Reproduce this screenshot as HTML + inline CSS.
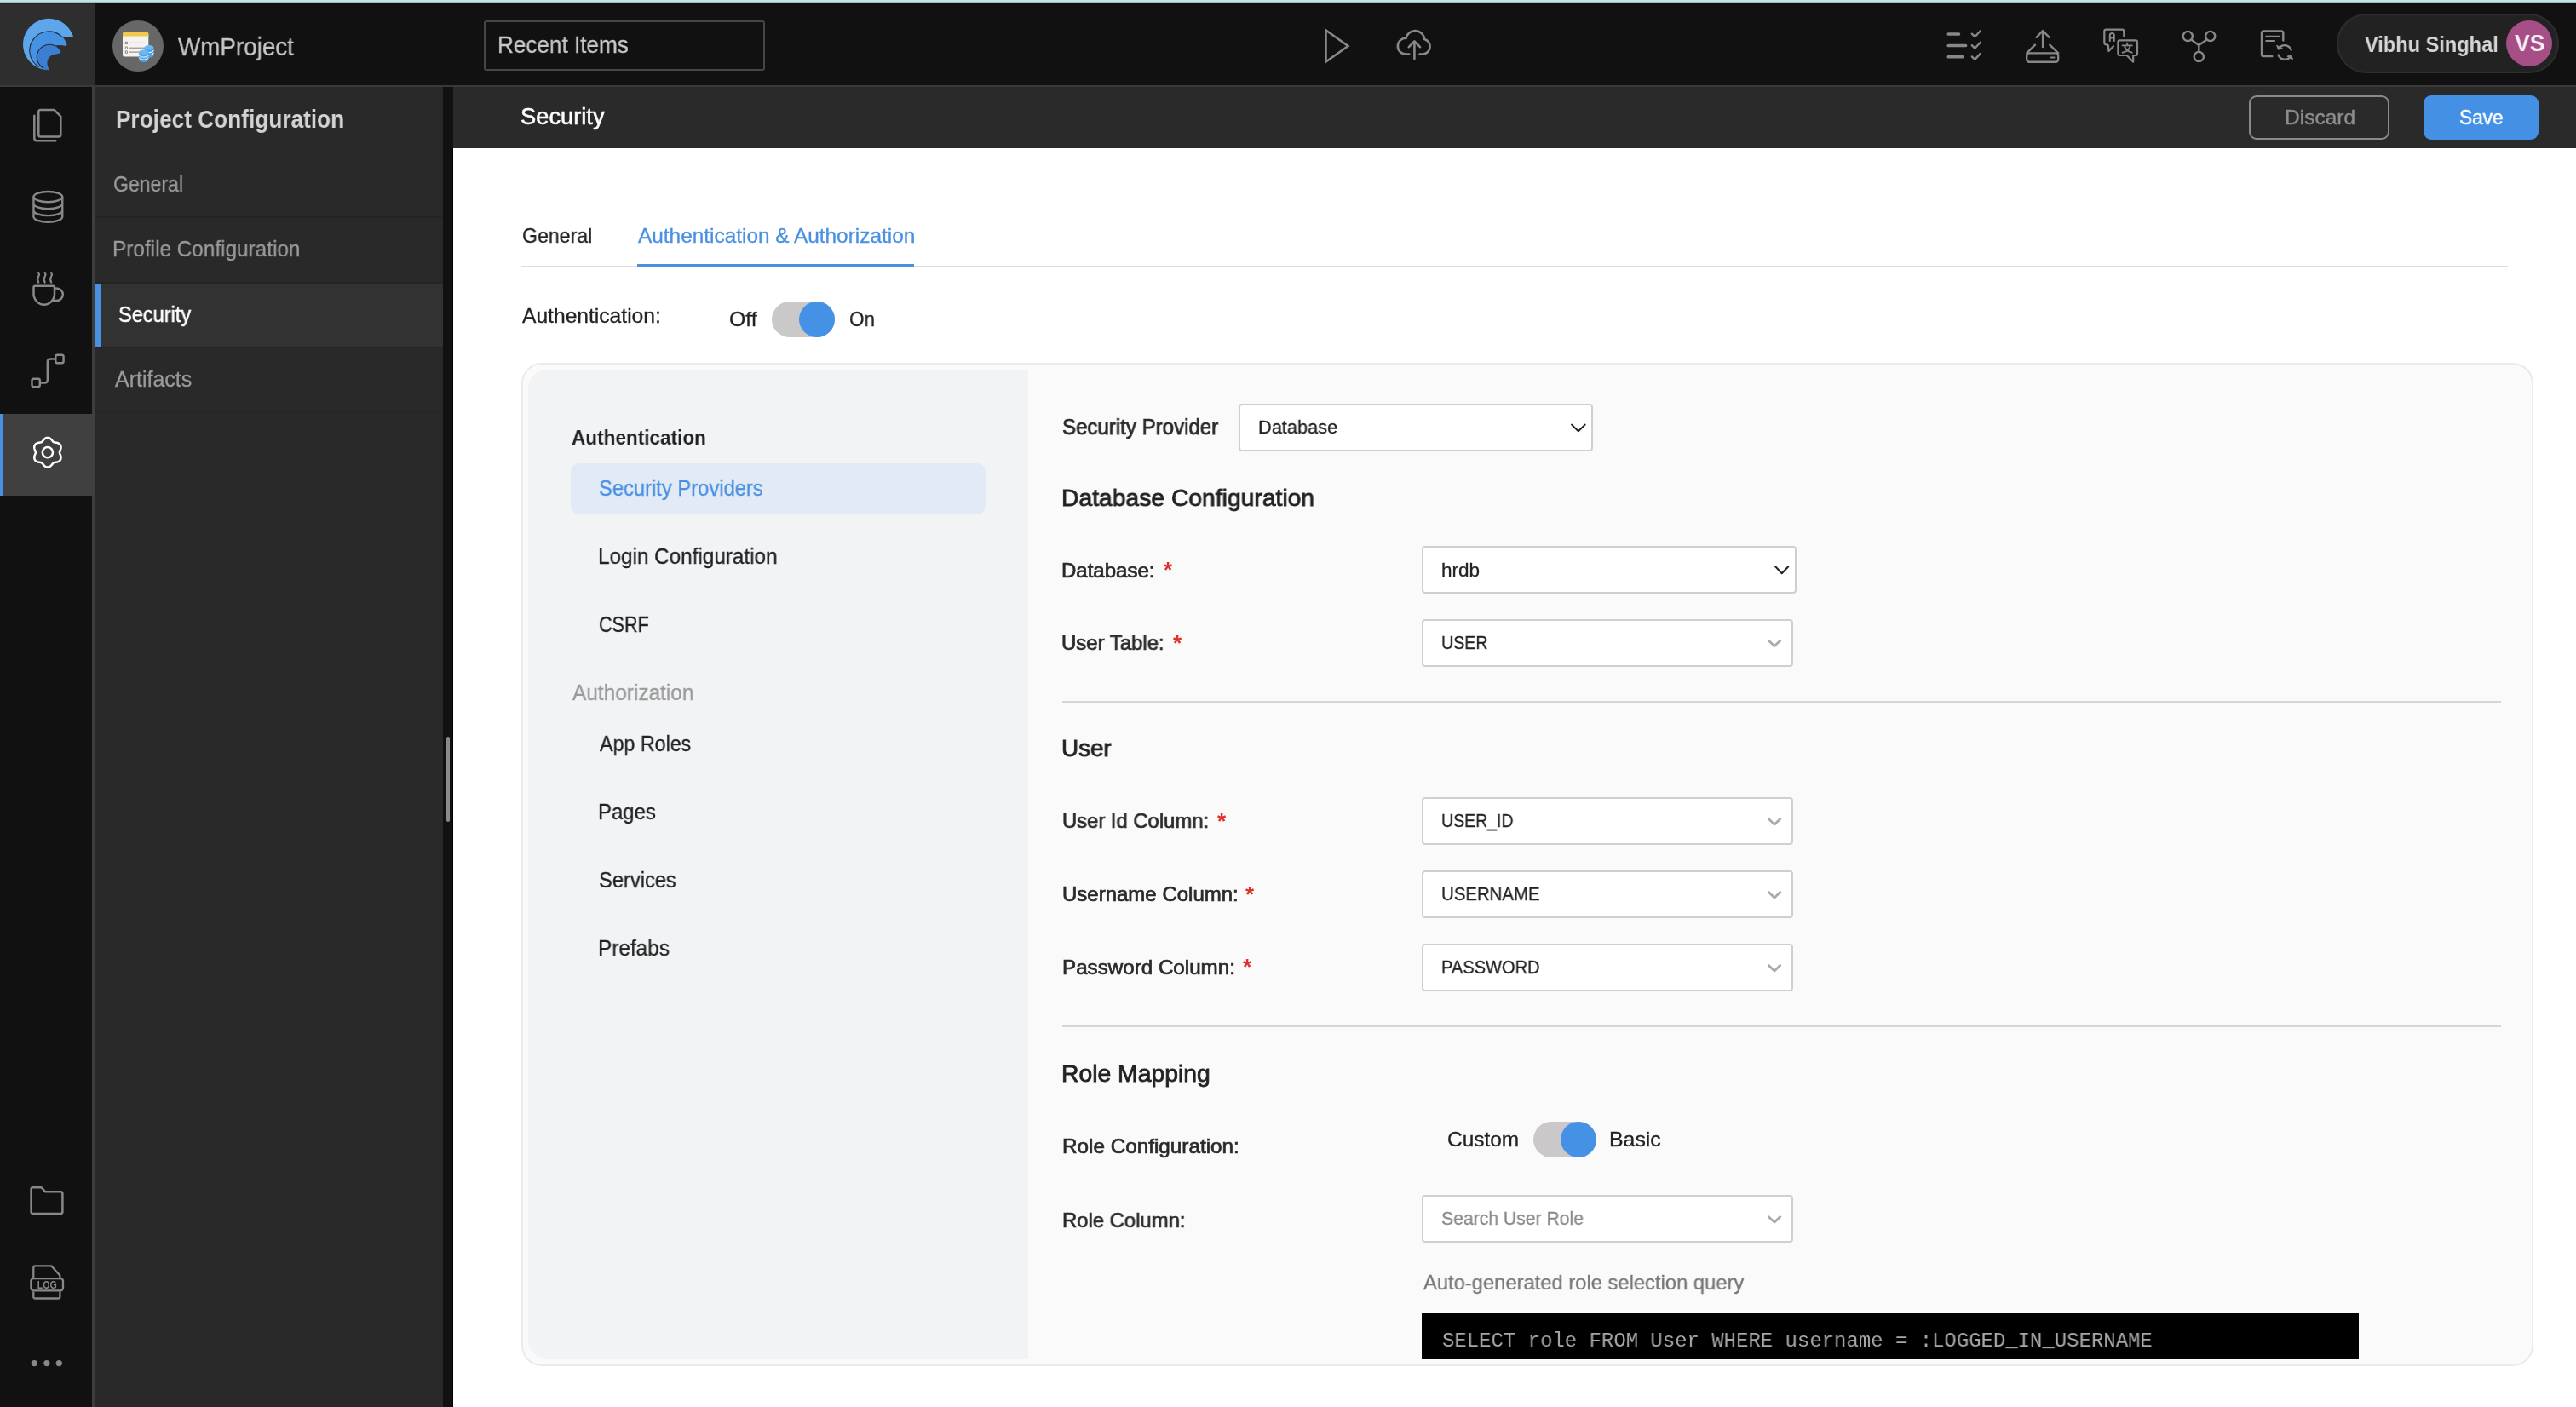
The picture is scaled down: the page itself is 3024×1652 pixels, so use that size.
<!DOCTYPE html>
<html><head><meta charset="utf-8">
<style>
html,body{margin:0;padding:0;}
body{width:3024px;height:1652px;overflow:hidden;position:relative;background:#fff;font-family:"Liberation Sans",sans-serif;}
.b{position:absolute;box-sizing:border-box;}
.t{position:absolute;white-space:nowrap;transform-origin:0 0;will-change:transform;}
.sel{position:absolute;box-sizing:border-box;background:#fff;border:2px solid #cfcfcf;border-radius:4px;}
</style></head><body>
<!-- top strip -->
<div class="b" style="left:0;top:0;width:3024px;height:2px;background:#c2e4e5"></div>
<div class="b" style="left:0;top:2px;width:3024px;height:2px;background:#a2b8ba"></div>
<!-- top bar -->
<div class="b" style="left:0;top:4px;width:3024px;height:96px;background:#111111"></div>
<div class="b" style="left:0;top:4px;width:112px;height:96px;background:#2e2e2e"></div>
<div class="b" style="left:0;top:4px;width:112px;height:1px;background:#262626"></div>
<div class="b" style="left:0;top:100px;width:3024px;height:2px;background:#393939"></div>
<!-- project icon circle -->
<div class="b" style="left:132px;top:24px;width:60px;height:60px;border-radius:50%;background:#676767"></div>
<!-- recent items -->
<div class="b" style="left:568px;top:24px;width:330px;height:59px;border:2px solid #464646;border-radius:3px;background:#111"></div>
<!-- user pill -->
<div class="b" style="left:2743px;top:16px;width:261px;height:70px;border-radius:35px;background:#222;border:2px solid #2d2d2d"></div>
<div class="b" style="left:2942px;top:24px;width:54px;height:54px;border-radius:50%;background:#a64f87"></div>
<!-- rail -->
<div class="b" style="left:0;top:102px;width:108px;height:1550px;background:#111111"></div>
<div class="b" style="left:108px;top:102px;width:4px;height:1550px;background:#3d3d3d"></div>
<div class="b" style="left:0;top:486px;width:112px;height:96px;background:#404040"></div>
<div class="b" style="left:0;top:486px;width:4px;height:96px;background:#4a90e2"></div>
<!-- sidebar -->
<div class="b" style="left:112px;top:102px;width:408px;height:1550px;background:#292929"></div>
<div class="b" style="left:112px;top:254px;width:408px;height:2px;background:#242424"></div>
<div class="b" style="left:112px;top:331px;width:408px;height:2px;background:#242424"></div>
<div class="b" style="left:112px;top:333px;width:408px;height:74px;background:#323232"></div>
<div class="b" style="left:112px;top:333px;width:6px;height:74px;background:#4a90e2"></div>
<div class="b" style="left:112px;top:407px;width:408px;height:2px;background:#242424"></div>
<div class="b" style="left:112px;top:482px;width:408px;height:2px;background:#242424"></div>
<!-- splitter -->
<div class="b" style="left:520px;top:102px;width:12px;height:1550px;background:#111111"></div>
<div class="b" style="left:531px;top:174px;width:1px;height:1478px;background:#000"></div>
<div class="b" style="left:524px;top:865px;width:4px;height:100px;border-radius:2px;background:#8a8a8a"></div>
<!-- header -->
<div class="b" style="left:532px;top:102px;width:2492px;height:72px;background:#2a2a2a"></div>
<div class="b" style="left:2640px;top:112px;width:165px;height:52px;border:2px solid #8a8a8a;border-radius:9px"></div>
<div class="b" style="left:2845px;top:112px;width:135px;height:52px;border-radius:9px;background:#4390e5"></div>
<!-- tabs -->
<div class="b" style="left:612px;top:312px;width:2332px;height:2px;background:#dddddd"></div>
<div class="b" style="left:748px;top:310px;width:325px;height:4px;background:#4a90e2"></div>
<!-- toggle 1 -->
<div class="b" style="left:906px;top:354px;width:74px;height:42px;border-radius:21px;background:#cac8c9"></div>
<div class="b" style="left:938px;top:354px;width:42px;height:42px;border-radius:50%;background:#4491e6"></div>
<!-- card -->
<div class="b" style="left:612px;top:426px;width:2362px;height:1178px;border:2px solid #ebebeb;border-radius:24px;background:#fafafa"></div>
<div class="b" style="left:620px;top:434px;width:587px;height:1162px;border-radius:22px 0 0 22px;background:#f2f3f5"></div>
<div class="b" style="left:670px;top:544px;width:487px;height:60px;border-radius:10px;background:#e1eaf5"></div>
<!-- selects -->
<div class="sel" style="left:1454px;top:474px;width:416px;height:56px;"></div>
<div class="sel" style="left:1669px;top:641px;width:440px;height:56px;"></div>
<div class="sel" style="left:1669px;top:727px;width:436px;height:56px;"></div>
<div class="b" style="left:1247px;top:823px;width:1689px;height:2px;background:#d6d6d6"></div>
<div class="sel" style="left:1669px;top:936px;width:436px;height:56px;"></div>
<div class="sel" style="left:1669px;top:1022px;width:436px;height:56px;"></div>
<div class="sel" style="left:1669px;top:1108px;width:436px;height:56px;"></div>
<div class="b" style="left:1247px;top:1204px;width:1689px;height:2px;background:#d6d6d6"></div>
<!-- toggle 2 -->
<div class="b" style="left:1800px;top:1317px;width:74px;height:42px;border-radius:21px;background:#cac8c9"></div>
<div class="b" style="left:1832px;top:1317px;width:42px;height:42px;border-radius:50%;background:#4491e6"></div>
<div class="sel" style="left:1669px;top:1403px;width:436px;height:56px;"></div>
<!-- sql -->
<div class="b" style="left:1669px;top:1542px;width:1100px;height:54px;background:#000"></div>
<div class="t" id="t0" style="left:209.2px;top:40.3px;font-size:30px;line-height:30px;color:#c6c6c6;font-weight:400;font-family:'Liberation Sans', sans-serif;-webkit-text-stroke:0.3px #c6c6c6;transform:scaleX(0.9266);">WmProject</div>
<div class="t" id="t1" style="left:583.8px;top:39.2px;font-size:28px;line-height:28px;color:#c8c8c8;font-weight:400;font-family:'Liberation Sans', sans-serif;-webkit-text-stroke:0.3px #c8c8c8;transform:scaleX(0.9321);">Recent Items</div>
<div class="t" id="t2" style="left:2776.3px;top:39.4px;font-size:26px;line-height:26px;color:#d6d6d6;font-weight:700;font-family:'Liberation Sans', sans-serif;transform:scaleX(0.9064);">Vibhu Singhal</div>
<div class="t" id="t3" style="left:2952.2px;top:37.1px;font-size:28px;line-height:28px;color:#f8f0f6;font-weight:700;font-family:'Liberation Sans', sans-serif;transform:scaleX(0.9467);">VS</div>
<div class="t" id="t4" style="left:135.9px;top:126.1px;font-size:29px;line-height:29px;color:#d4d4d4;font-weight:700;font-family:'Liberation Sans', sans-serif;transform:scaleX(0.9044);">Project Configuration</div>
<div class="t" id="t5" style="left:132.6px;top:203.8px;font-size:25px;line-height:25px;color:#9a9a9a;font-weight:400;font-family:'Liberation Sans', sans-serif;-webkit-text-stroke:0.3px #9a9a9a;transform:scaleX(0.9212);">General</div>
<div class="t" id="t6" style="left:131.5px;top:280.0px;font-size:25px;line-height:25px;color:#9a9a9a;font-weight:400;font-family:'Liberation Sans', sans-serif;-webkit-text-stroke:0.3px #9a9a9a;transform:scaleX(0.9731);">Profile Configuration</div>
<div class="t" id="t7" style="left:138.9px;top:356.8px;font-size:25px;line-height:25px;color:#ffffff;font-weight:400;font-family:'Liberation Sans', sans-serif;-webkit-text-stroke:0.50px #ffffff;transform:scaleX(0.9442);">Security</div>
<div class="t" id="t8" style="left:134.5px;top:432.7px;font-size:25px;line-height:25px;color:#9a9a9a;font-weight:400;font-family:'Liberation Sans', sans-serif;-webkit-text-stroke:0.3px #9a9a9a;">Artifacts</div>
<div class="t" id="t9" style="left:610.8px;top:124.4px;font-size:27px;line-height:27px;color:#ffffff;font-weight:400;font-family:'Liberation Sans', sans-serif;-webkit-text-stroke:0.54px #ffffff;transform:scaleX(1.0109);">Security</div>
<div class="t" id="t10" style="left:2681.9px;top:125.7px;font-size:24px;line-height:24px;color:#8c8c8c;font-weight:400;font-family:'Liberation Sans', sans-serif;-webkit-text-stroke:0.48px #8c8c8c;transform:scaleX(1.0206);">Discard</div>
<div class="t" id="t11" style="left:2887.2px;top:125.7px;font-size:24px;line-height:24px;color:#ffffff;font-weight:400;font-family:'Liberation Sans', sans-serif;-webkit-text-stroke:0.48px #ffffff;transform:scaleX(0.9441);">Save</div>
<div class="t" id="t12" style="left:612.9px;top:265.0px;font-size:24px;line-height:24px;color:#222222;font-weight:400;font-family:'Liberation Sans', sans-serif;-webkit-text-stroke:0.3px #222222;transform:scaleX(0.9639);">General</div>
<div class="t" id="t13" style="left:749.2px;top:265.0px;font-size:24px;line-height:24px;color:#4a90e2;font-weight:400;font-family:'Liberation Sans', sans-serif;-webkit-text-stroke:0.3px #4a90e2;transform:scaleX(1.0157);">Authentication &amp; Authorization</div>
<div class="t" id="t14" style="left:613.2px;top:359.1px;font-size:24px;line-height:24px;color:#222222;font-weight:400;font-family:'Liberation Sans', sans-serif;-webkit-text-stroke:0.3px #222222;transform:scaleX(1.0255);">Authentication:</div>
<div class="t" id="t15" style="left:855.6px;top:363.1px;font-size:24px;line-height:24px;color:#222222;font-weight:400;font-family:'Liberation Sans', sans-serif;-webkit-text-stroke:0.3px #222222;transform:scaleX(1.0343);">Off</div>
<div class="t" id="t16" style="left:996.5px;top:363.1px;font-size:24px;line-height:24px;color:#222222;font-weight:400;font-family:'Liberation Sans', sans-serif;-webkit-text-stroke:0.3px #222222;transform:scaleX(0.9333);">On</div>
<div class="t" id="t17" style="left:670.5px;top:501.7px;font-size:24px;line-height:24px;color:#222222;font-weight:700;font-family:'Liberation Sans', sans-serif;transform:scaleX(0.9398);">Authentication</div>
<div class="t" id="t18" style="left:702.6px;top:561.0px;font-size:25px;line-height:25px;color:#4a90e2;font-weight:400;font-family:'Liberation Sans', sans-serif;-webkit-text-stroke:0.3px #4a90e2;transform:scaleX(0.9502);">Security Providers</div>
<div class="t" id="t19" style="left:701.5px;top:641.2px;font-size:25px;line-height:25px;color:#222222;font-weight:400;font-family:'Liberation Sans', sans-serif;-webkit-text-stroke:0.3px #222222;transform:scaleX(0.9709);">Login Configuration</div>
<div class="t" id="t20" style="left:703.0px;top:721.0px;font-size:25px;line-height:25px;color:#222222;font-weight:400;font-family:'Liberation Sans', sans-serif;-webkit-text-stroke:0.3px #222222;transform:scaleX(0.8636);">CSRF</div>
<div class="t" id="t21" style="left:671.8px;top:801.0px;font-size:25px;line-height:25px;color:#9a9a9a;font-weight:400;font-family:'Liberation Sans', sans-serif;-webkit-text-stroke:0.3px #9a9a9a;transform:scaleX(0.9764);">Authorization</div>
<div class="t" id="t22" style="left:703.8px;top:861.1px;font-size:25px;line-height:25px;color:#222222;font-weight:400;font-family:'Liberation Sans', sans-serif;-webkit-text-stroke:0.3px #222222;transform:scaleX(0.9299);">App Roles</div>
<div class="t" id="t23" style="left:701.9px;top:941.1px;font-size:25px;line-height:25px;color:#222222;font-weight:400;font-family:'Liberation Sans', sans-serif;-webkit-text-stroke:0.3px #222222;transform:scaleX(0.9567);">Pages</div>
<div class="t" id="t24" style="left:702.9px;top:1021.1px;font-size:25px;line-height:25px;color:#222222;font-weight:400;font-family:'Liberation Sans', sans-serif;-webkit-text-stroke:0.3px #222222;transform:scaleX(0.9468);">Services</div>
<div class="t" id="t25" style="left:701.8px;top:1101.1px;font-size:25px;line-height:25px;color:#222222;font-weight:400;font-family:'Liberation Sans', sans-serif;-webkit-text-stroke:0.3px #222222;transform:scaleX(0.9739);">Prefabs</div>
<div class="t" id="t26" style="left:1246.5px;top:489.1px;font-size:25px;line-height:25px;color:#2a2a2a;font-weight:400;font-family:'Liberation Sans', sans-serif;-webkit-text-stroke:0.75px #2a2a2a;transform:scaleX(0.9624);">Security Provider</div>
<div class="t" id="t27" style="left:1477.0px;top:491.4px;font-size:22px;line-height:22px;color:#222222;font-weight:400;font-family:'Liberation Sans', sans-serif;-webkit-text-stroke:0.3px #222222;transform:scaleX(0.9890);">Database</div>
<div class="t" id="t28" style="left:1245.6px;top:569.9px;font-size:28.5px;line-height:28.5px;color:#222222;font-weight:400;font-family:'Liberation Sans', sans-serif;-webkit-text-stroke:0.85px #222222;transform:scaleX(0.9920);">Database Configuration</div>
<div class="t" id="t29" style="left:1246.4px;top:657.5px;font-size:24px;line-height:24px;color:#2a2a2a;font-weight:400;font-family:'Liberation Sans', sans-serif;-webkit-text-stroke:0.72px #2a2a2a;">Database:</div>
<div class="t" id="t30" style="left:1691.8px;top:658.7px;font-size:22px;line-height:22px;color:#222222;font-weight:400;font-family:'Liberation Sans', sans-serif;-webkit-text-stroke:0.3px #222222;transform:scaleX(1.0249);">hrdb</div>
<div class="t" id="t31" style="left:1246.4px;top:743.1px;font-size:24px;line-height:24px;color:#2a2a2a;font-weight:400;font-family:'Liberation Sans', sans-serif;-webkit-text-stroke:0.72px #2a2a2a;transform:scaleX(0.9971);">User Table:</div>
<div class="t" id="t32" style="left:1691.7px;top:744.3px;font-size:22px;line-height:22px;color:#222222;font-weight:400;font-family:'Liberation Sans', sans-serif;-webkit-text-stroke:0.3px #222222;transform:scaleX(0.8903);">USER</div>
<div class="t" id="t33" style="left:1246.2px;top:865.2px;font-size:28px;line-height:28px;color:#222222;font-weight:400;font-family:'Liberation Sans', sans-serif;-webkit-text-stroke:0.84px #222222;transform:scaleX(0.9924);">User</div>
<div class="t" id="t34" style="left:1247.2px;top:952.3px;font-size:24px;line-height:24px;color:#2a2a2a;font-weight:400;font-family:'Liberation Sans', sans-serif;-webkit-text-stroke:0.72px #2a2a2a;transform:scaleX(0.9920);">User Id Column:</div>
<div class="t" id="t35" style="left:1691.8px;top:953.3px;font-size:22px;line-height:22px;color:#222222;font-weight:400;font-family:'Liberation Sans', sans-serif;-webkit-text-stroke:0.3px #222222;transform:scaleX(0.8861);">USER_ID</div>
<div class="t" id="t36" style="left:1247.2px;top:1038.2px;font-size:24px;line-height:24px;color:#2a2a2a;font-weight:400;font-family:'Liberation Sans', sans-serif;-webkit-text-stroke:0.72px #2a2a2a;">Username Column:</div>
<div class="t" id="t37" style="left:1691.7px;top:1039.3px;font-size:22px;line-height:22px;color:#222222;font-weight:400;font-family:'Liberation Sans', sans-serif;-webkit-text-stroke:0.3px #222222;transform:scaleX(0.9267);">USERNAME</div>
<div class="t" id="t38" style="left:1247.3px;top:1123.7px;font-size:24px;line-height:24px;color:#2a2a2a;font-weight:400;font-family:'Liberation Sans', sans-serif;-webkit-text-stroke:0.72px #2a2a2a;transform:scaleX(1.0075);">Password Column:</div>
<div class="t" id="t39" style="left:1691.8px;top:1124.8px;font-size:22px;line-height:22px;color:#222222;font-weight:400;font-family:'Liberation Sans', sans-serif;-webkit-text-stroke:0.3px #222222;transform:scaleX(0.9124);">PASSWORD</div>
<div class="t" id="t40" style="left:1246.2px;top:1246.7px;font-size:28px;line-height:28px;color:#222222;font-weight:400;font-family:'Liberation Sans', sans-serif;-webkit-text-stroke:0.84px #222222;transform:scaleX(1.0110);">Role Mapping</div>
<div class="t" id="t41" style="left:1247.2px;top:1333.9px;font-size:24px;line-height:24px;color:#2a2a2a;font-weight:400;font-family:'Liberation Sans', sans-serif;-webkit-text-stroke:0.72px #2a2a2a;transform:scaleX(1.0112);">Role Configuration:</div>
<div class="t" id="t42" style="left:1699.4px;top:1326.4px;font-size:24px;line-height:24px;color:#222222;font-weight:400;font-family:'Liberation Sans', sans-serif;-webkit-text-stroke:0.3px #222222;transform:scaleX(1.0177);">Custom</div>
<div class="t" id="t43" style="left:1889.4px;top:1326.4px;font-size:24px;line-height:24px;color:#222222;font-weight:400;font-family:'Liberation Sans', sans-serif;-webkit-text-stroke:0.3px #222222;transform:scaleX(1.0357);">Basic</div>
<div class="t" id="t44" style="left:1247.2px;top:1420.6px;font-size:24px;line-height:24px;color:#2a2a2a;font-weight:400;font-family:'Liberation Sans', sans-serif;-webkit-text-stroke:0.72px #2a2a2a;transform:scaleX(0.9933);">Role Column:</div>
<div class="t" id="t45" style="left:1691.7px;top:1419.8px;font-size:22px;line-height:22px;color:#8a8a8a;font-weight:400;font-family:'Liberation Sans', sans-serif;-webkit-text-stroke:0.3px #8a8a8a;transform:scaleX(0.9615);">Search User Role</div>
<div class="t" id="t46" style="left:1670.7px;top:1494.0px;font-size:24px;line-height:24px;color:#777777;font-weight:400;font-family:'Liberation Sans', sans-serif;-webkit-text-stroke:0.3px #777777;transform:scaleX(0.9895);">Auto-generated role selection query</div>
<div class="t" id="t47" style="left:1692.6px;top:1563.4px;font-size:24.3px;line-height:24.3px;color:#a8a8a8;font-weight:400;font-family:'Liberation Mono', monospace;transform:scaleX(0.9860);">SELECT role FROM User WHERE username = :LOGGED_IN_USERNAME</div>
<div class="t" id="t48" style="left:1365.6px;top:655.9px;font-size:26px;line-height:26px;color:#e0302a;font-weight:700;font-family:'Liberation Sans', sans-serif;">*</div>
<div class="t" id="t49" style="left:1377.2px;top:741.5px;font-size:26px;line-height:26px;color:#e0302a;font-weight:700;font-family:'Liberation Sans', sans-serif;">*</div>
<div class="t" id="t50" style="left:1428.7px;top:950.7px;font-size:26px;line-height:26px;color:#e0302a;font-weight:700;font-family:'Liberation Sans', sans-serif;">*</div>
<div class="t" id="t51" style="left:1462.2px;top:1036.6px;font-size:26px;line-height:26px;color:#e0302a;font-weight:700;font-family:'Liberation Sans', sans-serif;">*</div>
<div class="t" id="t52" style="left:1459.2px;top:1122.1px;font-size:26px;line-height:26px;color:#e0302a;font-weight:700;font-family:'Liberation Sans', sans-serif;">*</div>
<svg width="3024" height="1652" viewBox="0 0 3024 1652" style="position:absolute;left:0;top:0;pointer-events:none"><g><path d="M57.20,82.20 A30.2,30.2 0 1 1 85.92,42.67 Q85.9,43.9 85.0,44.2 Q79,42.6 72.36,42.68 A22.5,22.5 0 1 0 57.30,81.90 Z" fill="#5ea6eb"/><path d="M57.30,81.90 A22.5,22.5 0 1 1 78.44,51.70 Q78.5,53.4 77.4,53.9 Q70.5,52.4 63.98,53.57 A14.7,14.7 0 1 0 58.00,81.70 Z" fill="#4591e4"/><path d="M58.00,81.70 A14.7,14.7 0 1 1 71.43,61.02 Q71.2,62.2 70.4,62.3 Q68,63 66,63.4 A10.6,10.6 0 0 0 55.4,74 A10.6,10.6 0 0 0 58.00,81.70 Z" fill="#3b7ed2"/><path d="M45.38,78.48 A22.5,22.5 0 1 1 72.36,42.68" fill="none" stroke="#23303f" stroke-width="1.1"/><path d="M51.10,79.98 A14.7,14.7 0 0 1 63.98,53.57" fill="none" stroke="#23303f" stroke-width="1.1"/></g><g><rect x="144" y="38" width="30.3" height="28.4" rx="2" fill="#f4f3f1"/><path d="M144,42.5 V40 Q144,38 146,38 H172.3 Q174.3,38 174.3,40 V42.5 Z" fill="#f2c94c"/><rect x="147.2" y="49.199999999999996" width="2.4" height="2.4" fill="none" stroke="#8b7d70" stroke-width="0.8"/><line x1="152" y1="50.4" x2="171" y2="50.4" stroke="#8b7d70" stroke-width="1"/><rect x="147.2" y="55.0" width="2.4" height="2.4" fill="none" stroke="#8b7d70" stroke-width="0.8"/><line x1="152" y1="56.2" x2="171" y2="56.2" stroke="#8b7d70" stroke-width="1"/><rect x="147.2" y="59.9" width="2.4" height="2.4" fill="none" stroke="#8b7d70" stroke-width="0.8"/><line x1="152" y1="61.1" x2="171" y2="61.1" stroke="#8b7d70" stroke-width="1"/><path d="M169.6,55.7 V65.0 A5.4,2.8 0 0 0 180.4,65.0 V55.7 Z" fill="#4aa3e8"/><ellipse cx="175" cy="55.7" rx="5.4" ry="2.8" fill="#6cb8f0"/><path d="M169.6,58.800000000000004 A5.4,2.8 0 0 0 180.4,58.800000000000004" fill="none" stroke="#ffffff" stroke-width="1"/><path d="M169.6,61.900000000000006 A5.4,2.8 0 0 0 180.4,61.900000000000006" fill="none" stroke="#ffffff" stroke-width="1"/><path d="M163.20000000000002,61.3 V70.3 A5.6,2.8 0 0 0 174.4,70.3 V61.3 Z" fill="#4aa3e8"/><ellipse cx="168.8" cy="61.3" rx="5.6" ry="2.8" fill="#6cb8f0"/><path d="M163.20000000000002,64.3 A5.6,2.8 0 0 0 174.4,64.3" fill="none" stroke="#ffffff" stroke-width="1"/><path d="M163.20000000000002,67.3 A5.6,2.8 0 0 0 174.4,67.3" fill="none" stroke="#ffffff" stroke-width="1"/></g><path d="M1556.5,35.5 V72.5 L1582.5,54 Z" fill="none" stroke="#888888" stroke-width="2.6" stroke-linejoin="miter"/><path d="M1654.2,63.6 H1650 A9.4,9.4 0 0 1 1650.5,44.8 A11,11 0 0 1 1672.2,46 A9,9 0 0 1 1670.5,63.6 H1666.5" fill="none" stroke="#888888" stroke-width="2.6" stroke-linecap="round"/><path d="M1660.4,69 V48.5 M1653.8,55.2 L1660.4,48.4 L1667,55.2" fill="none" stroke="#888888" stroke-width="2.6" stroke-linecap="round" stroke-linejoin="round"/><line x1="2287.3" y1="40" x2="2299.3999999999996" y2="40" stroke="#888888" stroke-width="3.7" stroke-linecap="round"/><path d="M2314.8,39.7 L2318.3,43.2 L2324.8,36.2" fill="none" stroke="#888888" stroke-width="2.4" stroke-linecap="round" stroke-linejoin="round"/><line x1="2287.3" y1="53.5" x2="2307.5" y2="53.5" stroke="#888888" stroke-width="3.7" stroke-linecap="round"/><path d="M2314.8,53.2 L2318.3,56.7 L2324.8,49.7" fill="none" stroke="#888888" stroke-width="2.4" stroke-linecap="round" stroke-linejoin="round"/><line x1="2287.3" y1="66.7" x2="2303.5" y2="66.7" stroke="#888888" stroke-width="3.7" stroke-linecap="round"/><path d="M2314.8,66.4 L2318.3,69.9 L2324.8,62.900000000000006" fill="none" stroke="#888888" stroke-width="2.4" stroke-linecap="round" stroke-linejoin="round"/><path d="M2398.1,55 V36.5 M2390.7,43.8 L2398.1,36 L2405.6,43.8" fill="none" stroke="#888888" stroke-width="2.4" stroke-linecap="round" stroke-linejoin="round"/><path d="M2389,52.7 L2379.2,62.4 M2406.3,52.7 L2416.2,62.4" fill="none" stroke="#888888" stroke-width="2.4" stroke-linecap="round"/><rect x="2379.2" y="62.4" width="37" height="10.4" rx="3" fill="none" stroke="#888888" stroke-width="2.4"/><line x1="2407.8" y1="67.5" x2="2411.6" y2="67.5" stroke="#888888" stroke-width="1.8" stroke-linecap="round"/><path d="M2493.3,42.6 V36.8 Q2493.3,34.6 2491,34.6 H2472.5 Q2470.3,34.6 2470.3,36.8 V50 Q2470.3,52.3 2472.6,52.3 H2473.6 Q2474.8,52.5 2474.9,53.6 L2475.4,60 L2481,54.2" fill="none" stroke="#888888" stroke-width="2.2" stroke-linecap="round" stroke-linejoin="round"/><path d="M2476.8,48 V41.6 Q2476.8,38.9 2479.3,38.9 Q2481.8,38.9 2481.8,41.6 V48 M2476.8,44.4 H2481.8" fill="none" stroke="#888888" stroke-width="2" stroke-linecap="round"/><path d="M2488.6,47.3 H2506.8 Q2509,47.3 2509,49.5 V62.7 Q2509,65 2506.8,65 H2504.2 V72.6 L2496.6,65 H2488.6 Q2486.4,65 2486.4,62.7 V49.5 Q2486.4,47.3 2488.6,47.3 Z" fill="none" stroke="#888888" stroke-width="2.2" stroke-linejoin="round"/><path d="M2491.6,53.4 H2502.8 M2497.2,50.6 V53 M2500.6,54.2 Q2498.8,60.2 2491.6,61.7 M2494.2,54.6 Q2496.4,60.2 2502.8,61.7" fill="none" stroke="#888888" stroke-width="1.9" stroke-linecap="round"/><circle cx="2568.3" cy="42.5" r="5.6" fill="none" stroke="#888888" stroke-width="2.4"/><circle cx="2594.7" cy="42.5" r="5.6" fill="none" stroke="#888888" stroke-width="2.4"/><circle cx="2581.3" cy="66.5" r="5.6" fill="none" stroke="#888888" stroke-width="2.4"/><path d="M2572.3,46.5 L2581.3,53.1 L2590.7,46.5 M2581.3,53.1 V60.9" fill="none" stroke="#888888" stroke-width="2.4" stroke-linejoin="round"/><path d="M2680.3,47.5 V38.8 Q2680.3,36.5 2678,36.5 H2657.3 Q2655,36.5 2655,38.8 V63.8 Q2655,66.1 2657.3,66.1 H2667.4" fill="none" stroke="#888888" stroke-width="2.4" stroke-linecap="round"/><path d="M2660.3,42.9 H2675.6 M2660.3,48 H2670" fill="none" stroke="#888888" stroke-width="2.2" stroke-linecap="round"/><path d="M2675.3,56.5 A8.2,8.2 0 0 1 2689.6,58.5 M2689.2,66 A8.2,8.2 0 0 1 2674.6,64.5" fill="none" stroke="#888888" stroke-width="2.4" stroke-linecap="round"/><path d="M2672.6,53.3 L2674.5,58.3 L2679.3,56.5 Z M2691.5,69.5 L2689.8,64.4 L2684.9,66.2 Z" fill="#888888" stroke="#888888" stroke-width="1" stroke-linejoin="round"/><path d="M47.2,128.9 H63.6 L71.3,136.6 V158.3 Q71.3,160.6 69,160.6 H47.5 Q45.3,160.6 45.3,158.3 V131.2 Q45.3,128.9 47.6,128.9 Z" fill="none" stroke="#888888" stroke-width="2.5" stroke-linejoin="round"/><path d="M40.3,135.8 V162.3 Q40.3,165.2 43.2,165.2 H65.3" fill="none" stroke="#888888" stroke-width="2.5" stroke-linecap="round"/><ellipse cx="56.35" cy="231.1" rx="16.9" ry="6.1" fill="none" stroke="#888888" stroke-width="2.4"/><path d="M39.45,231.1 V254.6 A16.9,6.2 0 0 0 73.25,254.6 V231.1 M39.45,239 A16.9,6.2 0 0 0 73.25,239 M39.45,246.9 A16.9,6.2 0 0 0 73.25,246.9" fill="none" stroke="#888888" stroke-width="2.4"/><path d="M41.3,335.8 H62.2 Q64,335.8 64,337.6 V346 A12.3,12.8 0 0 1 39.5,346 V337.6 Q39.5,335.8 41.3,335.8 Z" fill="none" stroke="#888888" stroke-width="2.5"/><path d="M64,338.4 H66.5 A7.3,7.3 0 0 1 66.5,353 H62" fill="none" stroke="#888888" stroke-width="2.5"/><path d="M45.2,320 Q46.800000000000004,322.3 45.0,325 Q43.2,327.8 45.2,331.6" fill="none" stroke="#888888" stroke-width="2.2" stroke-linecap="round"/><path d="M52.7,320 Q54.300000000000004,322.3 52.5,325 Q50.7,327.8 52.7,331.6" fill="none" stroke="#888888" stroke-width="2.2" stroke-linecap="round"/><path d="M60.2,320 Q61.800000000000004,322.3 60.0,325 Q58.2,327.8 60.2,331.6" fill="none" stroke="#888888" stroke-width="2.2" stroke-linecap="round"/><rect x="65.3" y="416.7" width="9.3" height="9.5" rx="2" fill="none" stroke="#888888" stroke-width="2.4"/><rect x="37.5" y="444.7" width="9.3" height="9.4" rx="2" fill="none" stroke="#888888" stroke-width="2.4"/><path d="M46.8,449.5 H52.6 Q55.8,449.5 55.8,446.3 V424.8 Q55.8,421.5 59,421.5 H65.3" fill="none" stroke="#888888" stroke-width="2.4"/><path d="M69.90,531.20 L69.98,531.69 L70.13,532.20 L70.32,532.72 L70.54,533.26 L70.76,533.82 L70.97,534.40 L71.17,535.01 L71.33,535.62 L71.45,536.25 L71.52,536.88 L71.53,537.51 L71.47,538.13 L71.35,538.73 L71.15,539.31 L70.88,539.85 L70.55,540.35 L70.15,540.81 L69.69,541.22 L69.18,541.58 L68.63,541.88 L68.05,542.14 L67.45,542.35 L66.83,542.52 L66.21,542.65 L65.60,542.76 L65.00,542.85 L64.43,542.93 L63.88,543.03 L63.37,543.15 L62.90,543.32 L62.51,543.64 L62.15,544.02 L61.80,544.45 L61.44,544.91 L61.06,545.38 L60.66,545.86 L60.24,546.33 L59.78,546.78 L59.30,547.19 L58.79,547.57 L58.25,547.89 L57.68,548.15 L57.10,548.34 L56.50,548.46 L55.90,548.50 L55.30,548.46 L54.70,548.34 L54.12,548.15 L53.55,547.89 L53.01,547.57 L52.50,547.19 L52.02,546.78 L51.56,546.33 L51.14,545.86 L50.74,545.38 L50.36,544.91 L50.00,544.45 L49.65,544.02 L49.29,543.64 L48.90,543.32 L48.43,543.15 L47.92,543.03 L47.37,542.93 L46.80,542.85 L46.20,542.76 L45.59,542.65 L44.97,542.52 L44.35,542.35 L43.75,542.14 L43.17,541.88 L42.62,541.58 L42.11,541.22 L41.65,540.81 L41.25,540.35 L40.92,539.85 L40.65,539.31 L40.45,538.73 L40.33,538.13 L40.27,537.51 L40.28,536.88 L40.35,536.25 L40.47,535.62 L40.63,535.01 L40.83,534.40 L41.04,533.82 L41.26,533.26 L41.48,532.72 L41.67,532.20 L41.82,531.69 L41.90,531.20 L41.82,530.71 L41.67,530.20 L41.48,529.68 L41.26,529.14 L41.04,528.58 L40.83,528.00 L40.63,527.39 L40.47,526.78 L40.35,526.15 L40.28,525.52 L40.27,524.89 L40.33,524.27 L40.45,523.67 L40.65,523.09 L40.92,522.55 L41.25,522.05 L41.65,521.59 L42.11,521.18 L42.62,520.82 L43.17,520.52 L43.75,520.26 L44.35,520.05 L44.97,519.88 L45.59,519.75 L46.20,519.64 L46.80,519.55 L47.37,519.47 L47.92,519.37 L48.43,519.25 L48.90,519.08 L49.29,518.76 L49.65,518.38 L50.00,517.95 L50.36,517.49 L50.74,517.02 L51.14,516.54 L51.56,516.07 L52.02,515.62 L52.50,515.21 L53.01,514.83 L53.55,514.51 L54.12,514.25 L54.70,514.06 L55.30,513.94 L55.90,513.90 L56.50,513.94 L57.10,514.06 L57.68,514.25 L58.25,514.51 L58.79,514.83 L59.30,515.21 L59.78,515.62 L60.24,516.07 L60.66,516.54 L61.06,517.02 L61.44,517.49 L61.80,517.95 L62.15,518.38 L62.51,518.76 L62.90,519.08 L63.37,519.25 L63.88,519.37 L64.43,519.47 L65.00,519.55 L65.60,519.64 L66.21,519.75 L66.83,519.88 L67.45,520.05 L68.05,520.26 L68.63,520.52 L69.18,520.82 L69.69,521.18 L70.15,521.59 L70.55,522.05 L70.88,522.55 L71.15,523.09 L71.35,523.67 L71.47,524.27 L71.53,524.89 L71.52,525.52 L71.45,526.15 L71.33,526.78 L71.17,527.39 L70.97,528.00 L70.76,528.58 L70.54,529.14 L70.32,529.68 L70.13,530.20 L69.98,530.71 L69.90,531.20 Z" fill="none" stroke="#ffffff" stroke-width="2.5" stroke-linejoin="round"/><circle cx="55.9" cy="531.2" r="6.1" fill="none" stroke="#ffffff" stroke-width="2.5"/><path d="M38.6,1394.2 H47.6 Q48.6,1394.2 49.4,1395 L53.2,1399.3 H71.2 Q73.4,1399.3 73.4,1401.5 V1422.8 Q73.4,1425 71.2,1425 H38.8 Q36.6,1425 36.6,1422.8 V1396.2 Q36.6,1394.2 38.6,1394.2 Z" fill="none" stroke="#888888" stroke-width="2.5" stroke-linejoin="round"/><path d="M39.3,1500 V1488.3 Q39.3,1486.3 41.3,1486.3 H60.2 L70.4,1497.5 V1500 M70.4,1516.5 V1522.5 Q70.4,1524.5 68.4,1524.5 H41.3 Q39.3,1524.5 39.3,1522.5 V1516.5" fill="none" stroke="#888888" stroke-width="2.3" stroke-linejoin="round"/><rect x="36.4" y="1501.2" width="37.6" height="14.1" rx="3" fill="none" stroke="#888888" stroke-width="2.3"/><text x="55.2" y="1513.2" font-family="Liberation Sans" font-weight="700" font-size="12.5" fill="#888888" text-anchor="middle" textLength="23" lengthAdjust="spacingAndGlyphs">LOG</text><circle cx="40.3" cy="1600.6" r="3.6" fill="#888888"/><circle cx="54.9" cy="1600.6" r="3.6" fill="#888888"/><circle cx="69.3" cy="1600.6" r="3.6" fill="#888888"/><path d="M1845,498.6 L1852.85,506.3 L1860.7,498.6" fill="none" stroke="#222" stroke-width="2" stroke-linecap="round" stroke-linejoin="round"/><path d="M2084.2,665.3 L2091.75,673.2 L2099.3,665.3" fill="none" stroke="#222" stroke-width="2" stroke-linecap="round" stroke-linejoin="round"/><path d="M2076.3,752.2 L2083.05,758.6 L2089.8,752.2" fill="none" stroke="#aaaaaa" stroke-width="2.8" stroke-linecap="round" stroke-linejoin="round"/><path d="M2076.3,961.5 L2083.05,967.9 L2089.8,961.5" fill="none" stroke="#aaaaaa" stroke-width="2.8" stroke-linecap="round" stroke-linejoin="round"/><path d="M2076.3,1047.6000000000001 L2083.05,1054.0 L2089.8,1047.6000000000001" fill="none" stroke="#aaaaaa" stroke-width="2.8" stroke-linecap="round" stroke-linejoin="round"/><path d="M2076.3,1133.5 L2083.05,1139.8999999999999 L2089.8,1133.5" fill="none" stroke="#aaaaaa" stroke-width="2.8" stroke-linecap="round" stroke-linejoin="round"/><path d="M2076.3,1428.7 L2083.05,1435.1 L2089.8,1428.7" fill="none" stroke="#aaaaaa" stroke-width="2.8" stroke-linecap="round" stroke-linejoin="round"/></svg>
</body></html>
